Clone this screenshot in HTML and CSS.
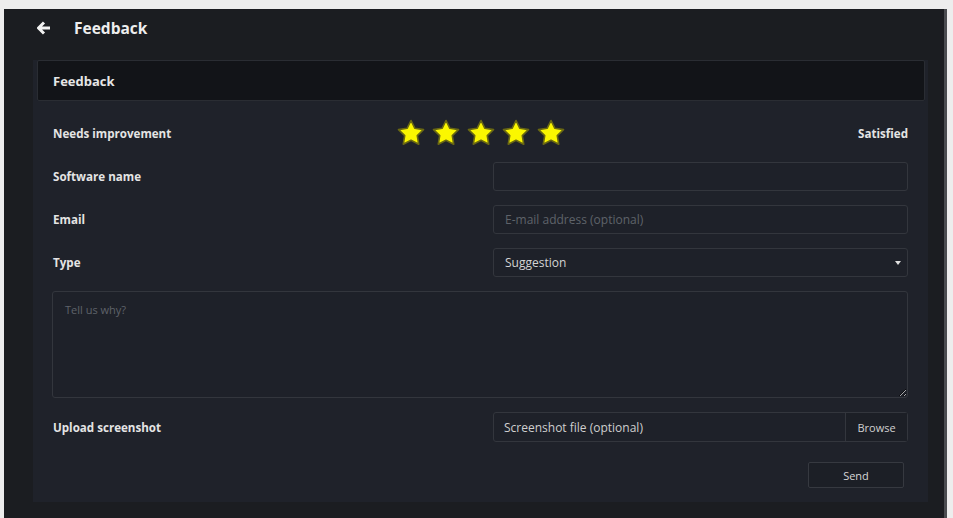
FILE: index.html
```html
<!DOCTYPE html>
<html lang="en">
<head>
    <meta charset="UTF-8">
    <meta name="viewport" content="width=device-width, initial-scale=1.0">
    <title>Feedback</title>
    <link rel="stylesheet" href="styles.css">
</head>
<body>

    <div class="window">
        <div class="topbar">
            <svg class="back" width="14" height="14" viewBox="0 0 14 14">
                <path d="M7 1.5 1.5 7 7 12.5M2 7h11" fill="none" stroke="#f2f2f2" stroke-width="3" stroke-linejoin="round"/>
            </svg>
            <span class="title">Feedback</span>
        </div>

        <div class="panel">
            <div class="card-header">Feedback</div>

            <form class="form" id="feedbackForm">
                <div class="rating">
                    <span class="label">Needs improvement</span>
                    <div class="stars">
                        <svg class="star" viewBox="0 0 24 24"><path d="M12 2L15.12 8.21L21.99 9.26L17.04 14.14L18.17 20.99L12 17.8L5.83 20.99L6.96 14.14L2.01 9.26L8.88 8.21Z"/></svg>
                        <svg class="star" viewBox="0 0 24 24"><path d="M12 2L15.12 8.21L21.99 9.26L17.04 14.14L18.17 20.99L12 17.8L5.83 20.99L6.96 14.14L2.01 9.26L8.88 8.21Z"/></svg>
                        <svg class="star" viewBox="0 0 24 24"><path d="M12 2L15.12 8.21L21.99 9.26L17.04 14.14L18.17 20.99L12 17.8L5.83 20.99L6.96 14.14L2.01 9.26L8.88 8.21Z"/></svg>
                        <svg class="star" viewBox="0 0 24 24"><path d="M12 2L15.12 8.21L21.99 9.26L17.04 14.14L18.17 20.99L12 17.8L5.83 20.99L6.96 14.14L2.01 9.26L8.88 8.21Z"/></svg>
                        <svg class="star" viewBox="0 0 24 24"><path d="M12 2L15.12 8.21L21.99 9.26L17.04 14.14L18.17 20.99L12 17.8L5.83 20.99L6.96 14.14L2.01 9.26L8.88 8.21Z"/></svg>
                    </div>
                    <span class="label right">Satisfied</span>
                </div>

                <div class="row">
                    <label class="label" for="software">Software name</label>
                    <input class="field" type="text" id="software">
                </div>

                <div class="row">
                    <label class="label" for="email">Email</label>
                    <input class="field" type="text" id="email" placeholder="E-mail address (optional)">
                </div>

                <div class="row">
                    <label class="label" for="type">Type</label>
                    <div class="select-wrap">
                        <select class="field" id="type">
                            <option>Suggestion</option>
                            <option>Bug</option>
                        </select>
                    </div>
                </div>

                <textarea class="message" placeholder="Tell us why?"></textarea>

                <div class="row upload">
                    <span class="label">Upload screenshot</span>
                    <div class="file-group">
                        <span class="file-name">Screenshot file (optional)</span>
                        <button type="button" class="browse">Browse</button>
                    </div>
                </div>

                <div class="actions">
                    <button type="submit" class="send">Send</button>
                </div>
            </form>
        </div>
    </div>

</body>
</html>
```

FILE: styles.css
```css
body {
    margin: 0;
    background-color: #ededed;
    font-family: "Open Sans", "DejaVu Sans", sans-serif;
    overflow: hidden;
}

.window {
    margin: 9px 6px 0 4px;
    height: 509px;
    box-sizing: border-box;
    padding: 0 16px 0 29px;
    background-color: #1b1d21;
    border-right: 3px solid #4a4c50;
}

.topbar {
    height: 51px;
    display: flex;
    align-items: flex-start;
    padding-top: 11px;
    box-sizing: border-box;
}

.back {
    margin-left: 4px;
    margin-top: 1px;
}

.title {
    margin-left: 23px;
    color: #eeeeee;
    font-size: 15.5px;
    font-weight: 700;
    line-height: 16px;
}

.panel {
    height: 442px;
    background-color: #1f222a;
    padding: 0 3px 0 4px;
}

.card-header {
    height: 41px;
    box-sizing: border-box;
    display: flex;
    align-items: center;
    padding-left: 15px;
    background-color: #121418;
    border: 1px solid #2a2d33;
    border-radius: 2px;
    color: #e6e6e6;
    font-size: 13px;
    font-weight: 700;
}

.form {
    display: flex;
    flex-direction: column;
    gap: 14px;
    padding: 17px 17px 0 16px;
}

.label {
    color: #e4e4e4;
    font-size: 11.6px;
    font-weight: 700;
}

.rating {
    display: grid;
    grid-template-columns: 1fr auto 1fr;
    align-items: center;
    height: 30px;
}

.right {
    text-align: right;
}

.stars {
    display: flex;
    gap: 5px;
}

.star {
    width: 30px;
    height: 30px;
    fill: #fbf700;
    stroke: #6a6812;
    stroke-width: 1.3;
    stroke-linejoin: round;
}

.row {
    display: grid;
    grid-template-columns: 440px 1fr;
    align-items: center;
}

.field {
    height: 29px;
    width: 100%;
    box-sizing: border-box;
    background-color: #1e2129;
    border: 1px solid #33363d;
    border-radius: 3px;
    padding: 0 11px;
    color: #d4d4d4;
    font-family: inherit;
    font-size: 12px;
    outline: none;
}

.field::placeholder,
.message::placeholder {
    color: #5f636a;
}

.select-wrap {
    position: relative;
}

.select-wrap select {
    appearance: none;
    -webkit-appearance: none;
}

.select-wrap::after {
    content: "";
    position: absolute;
    right: 7px;
    top: 13px;
    border-left: 3px solid transparent;
    border-right: 3px solid transparent;
    border-top: 4px solid #e0e0e0;
}

.message {
    height: 107px;
    box-sizing: border-box;
    margin-top: 0;
    margin-left: -1px;
    background-color: #1e2129;
    border: 1px solid #33363d;
    border-radius: 3px;
    padding: 10px 12px;
    color: #d4d4d4;
    font-family: inherit;
    font-size: 11px;
    resize: vertical;
    outline: none;
}

.upload {
    margin-top: 0;
}

.file-group {
    display: flex;
    height: 30px;
    box-sizing: border-box;
    border: 1px solid #33363d;
    border-radius: 3px;
    background-color: #1e2129;
}

.file-name {
    flex: 1;
    display: flex;
    align-items: center;
    padding-left: 10px;
    color: #cfcfcf;
    font-size: 12px;
}

.browse {
    width: 62px;
    background-color: #1c1f26;
    border: none;
    border-left: 1px solid #33363d;
    color: #d0d0d0;
    font-family: inherit;
    font-size: 11px;
    cursor: pointer;
}

.actions {
    display: flex;
    justify-content: flex-end;
    padding-right: 4px;
    margin-top: 6px;
}

.send {
    width: 96px;
    height: 26px;
    background-color: #1c1f26;
    border: 1px solid #363940;
    border-radius: 2px;
    color: #d6d6d6;
    font-family: inherit;
    font-size: 11px;
    cursor: pointer;
}

.send:hover {
    background-color: #252833;
}
```
